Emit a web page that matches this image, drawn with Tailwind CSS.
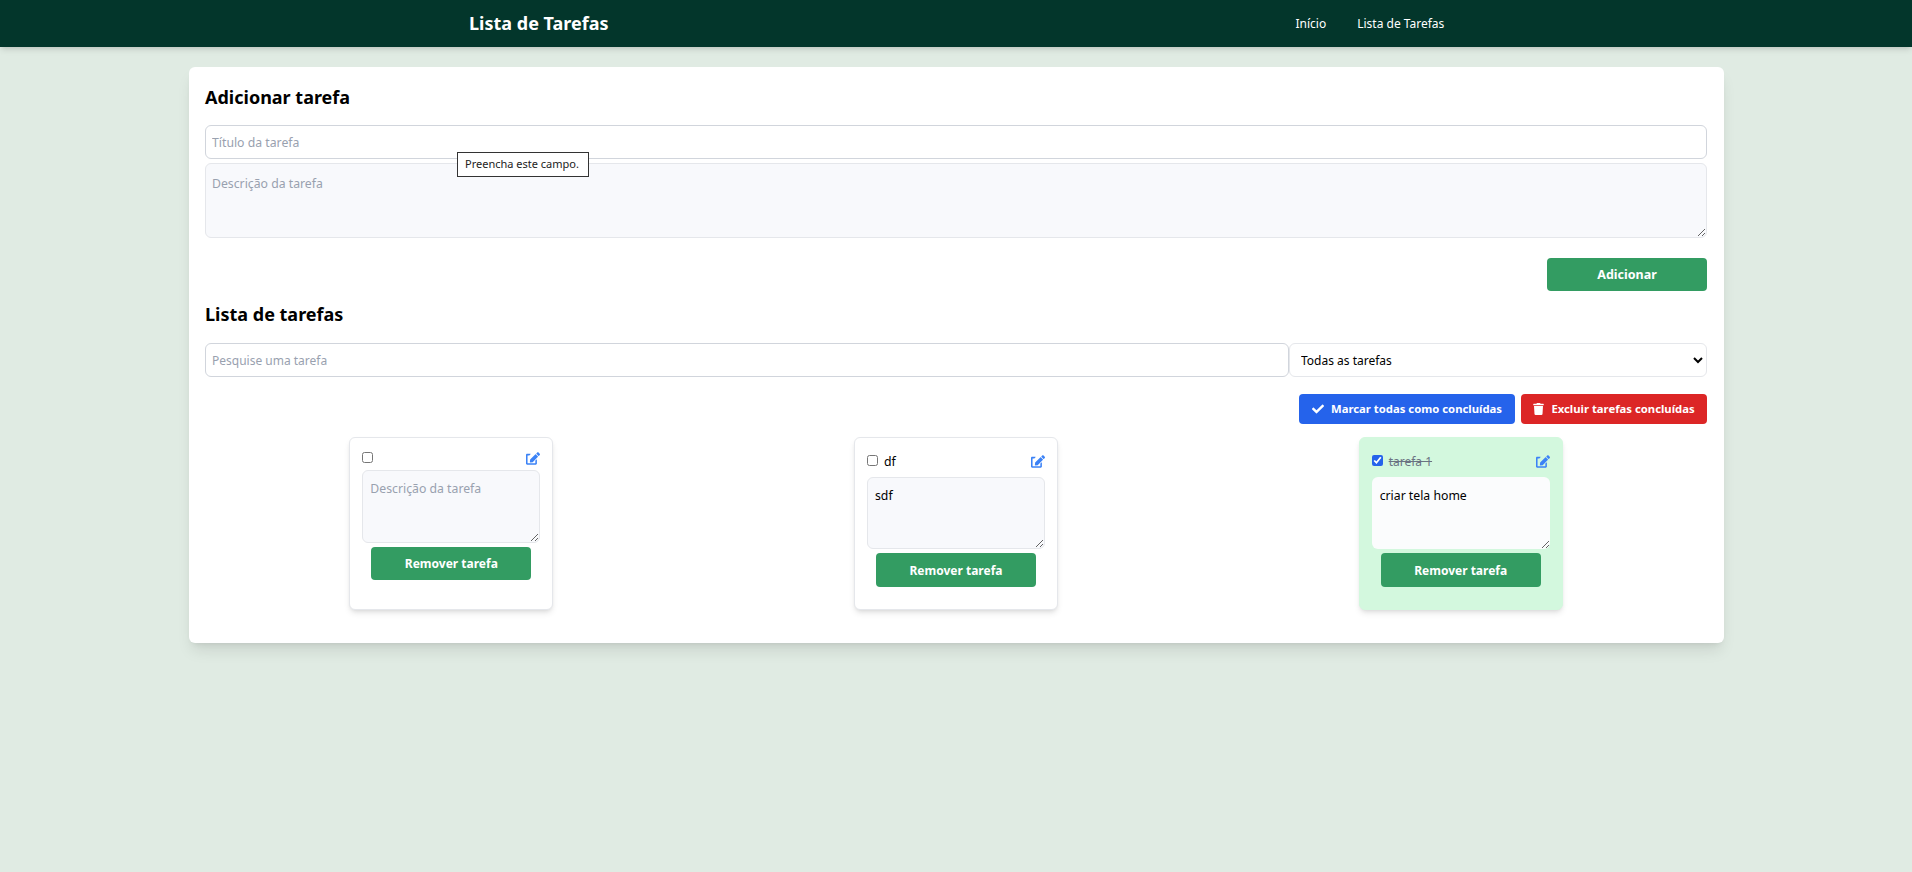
<!DOCTYPE html>
<html lang="pt-BR">
<head>
  <meta charset="UTF-8">
  <meta name="viewport" content="width=device-width, initial-scale=1.0">
  <title>Lista de Tarefas</title>
  <script src="https://cdn.jsdelivr.net/npm/@tailwindcss/browser@4"></script>
</head>
<body class="bg-[#e0ebe3] min-h-screen font-['Noto_Sans',sans-serif] text-black">
  <!-- Navbar -->
  <nav class="h-[47px] bg-[#03362b] shadow-md text-white flex items-center">
    <div class="w-[1536px] mx-auto flex items-center">
      <h1 class="ml-[281px] text-[18px] font-bold">Lista de Tarefas</h1>
      <ul class="ml-[687px] flex gap-[31px] text-[12px]">
        <li>Início</li>
        <li>Lista de Tarefas</li>
      </ul>
    </div>
  </nav>

  <main class="relative w-[1535px] ml-[189px] mt-[20px] bg-white rounded-md shadow-lg pl-4 pr-[17px] pt-[16px] pb-[33px]">
    <h2 class="text-[18px] leading-[28px] font-bold">Adicionar tarefa</h2>
    <form class="mt-[14px]">
      <input type="text" placeholder="Título da tarefa" class="block w-full h-[34px] px-[6px] text-[12.25px] border border-gray-300 rounded-md placeholder:text-gray-400">
      <textarea placeholder="Descrição da tarefa" class="block w-full h-[75px] mt-[4px] px-[6px] py-[11px] text-[12.25px] border border-gray-200 rounded-md bg-[#f8f9fc] placeholder:text-gray-400"></textarea>
      <div class="flex justify-end mt-[20px]">
        <button type="button" class="w-[160px] h-[33px] pt-[1px] bg-[#339c62] text-white text-[12.5px] font-bold rounded">Adicionar</button>
      </div>
    </form>

    <!-- Tooltip de validacao do navegador -->
    <div class="absolute left-[268px] top-[85px] w-[132px] h-[25px] px-[7px] flex items-center bg-white border border-[#333] text-[11px] text-[#222]">Preencha este campo.</div>

    <h2 class="text-[18px] leading-[26px] font-bold mt-[10px]">Lista de tarefas</h2>
    <div class="flex mt-[16px]">
      <input type="text" placeholder="Pesquise uma tarefa" class="flex-1 h-[34px] px-[6px] pt-[1px] text-[12px] border border-gray-300 rounded-md placeholder:text-gray-400">
      <select class="w-[418px] h-[34px] px-[7px] pt-[1px] text-[12px] border border-gray-200 rounded-md bg-white">
        <option>Todas as tarefas</option>
      </select>
    </div>

    <div class="flex justify-end gap-[6px] mt-[17px]">
      <button type="button" class="h-[30px] w-[216px] flex items-center justify-center gap-[7px] bg-[#2563eb] text-white text-[11.3px] font-bold rounded">
        <svg class="w-[12px] h-[12px]" viewBox="0 0 512 512" fill="currentColor"><path d="M173.898 439.404l-166.4-166.4c-9.997-9.997-9.997-26.206 0-36.204l36.203-36.204c9.997-9.998 26.207-9.998 36.204 0L192 312.69 432.095 72.596c9.997-9.997 26.207-9.997 36.204 0l36.203 36.204c9.997 9.997 9.997 26.206 0 36.204l-294.4 294.401c-9.998 9.997-26.207 9.997-36.204-.001z"/></svg>
        Marcar todas como concluídas
      </button>
      <button type="button" class="h-[30px] w-[186px] flex items-center justify-center gap-[7px] bg-[#dc2626] text-white text-[11.3px] font-bold rounded">
        <svg class="w-[11px] h-[12px]" viewBox="0 0 448 512" fill="currentColor"><path d="M432 32H312l-9.4-18.7A24 24 0 0 0 281.1 0H166.8a23.72 23.72 0 0 0-21.4 13.3L136 32H16A16 16 0 0 0 0 48v32a16 16 0 0 0 16 16h416a16 16 0 0 0 16-16V48a16 16 0 0 0-16-16zM53.2 467a48 48 0 0 0 47.9 45h245.8a48 48 0 0 0 47.9-45L416 128H32z"/></svg>
        Excluir tarefas concluídas
      </button>
    </div>

    <div class="grid grid-cols-3 gap-3 mt-[13px]">
      <!-- Tarefa sem titulo -->
      <div class="justify-self-center w-[204px] h-[173px] bg-white border border-gray-200 rounded-md shadow-md px-[12px] pt-[14px]">
        <div class="flex items-start justify-between h-[18px]">
          <input type="checkbox" class="w-[11px] h-[11px]">
          <svg class="w-[14px] h-[13px] text-[#3b82f6]" viewBox="0 0 576 512" fill="currentColor"><path d="M402.6 83.2l90.2 90.2c3.8 3.8 3.8 10 0 13.8L274.4 405.6l-92.8 10.3c-12.4 1.4-22.9-9.1-21.5-21.5l10.3-92.8L388.8 83.2c3.8-3.8 10-3.8 13.8 0zm162-22.9l-48.8-48.8c-15.2-15.2-39.9-15.2-55.2 0l-35.4 35.4c-3.8 3.8-3.8 10 0 13.8l90.2 90.2c3.8 3.8 10 3.8 13.8 0l35.4-35.4c15.2-15.3 15.2-40 0-55.2zM384 346.2V448H64V128h73.9c3.2 0 6.2-1.3 8.5-3.5l40-40c7.6-7.6 2.2-20.5-8.5-20.5H48C21.5 64 0 85.5 0 112v352c0 26.5 21.5 48 48 48h352c26.5 0 48-21.5 48-48V306.2c0-10.7-12.9-16-20.5-8.5l-40 40c-2.2 2.3-3.5 5.3-3.5 8.5z"/></svg>
        </div>
        <textarea placeholder="Descrição da tarefa" class="block w-full h-[73px] px-[7px] py-[9px] text-[12.25px] border border-gray-200 rounded-md bg-[#f8f9fc] placeholder:text-gray-400"></textarea>
        <button type="button" class="block w-[160px] h-[33px] mx-auto mt-[4px] pt-[1px] bg-[#339c62] text-white text-[12px] font-bold rounded">Remover tarefa</button>
      </div>

      <div class="justify-self-center w-[204px] h-[173px] bg-white border border-gray-200 rounded-md shadow-md px-[12px] pt-[14px]">
        <div class="flex items-start h-[25px]">
          <input type="checkbox" class="w-[11px] h-[11px] mt-[3px]">
          <span class="ml-[6px] text-[12.25px] leading-[20px]">df</span>
          <svg class="w-[14px] h-[13px] ml-auto text-[#3b82f6] mt-[3px]" viewBox="0 0 576 512" fill="currentColor"><path d="M402.6 83.2l90.2 90.2c3.8 3.8 3.8 10 0 13.8L274.4 405.6l-92.8 10.3c-12.4 1.4-22.9-9.1-21.5-21.5l10.3-92.8L388.8 83.2c3.8-3.8 10-3.8 13.8 0zm162-22.9l-48.8-48.8c-15.2-15.2-39.9-15.2-55.2 0l-35.4 35.4c-3.8 3.8-3.8 10 0 13.8l90.2 90.2c3.8 3.8 10 3.8 13.8 0l35.4-35.4c15.2-15.3 15.2-40 0-55.2zM384 346.2V448H64V128h73.9c3.2 0 6.2-1.3 8.5-3.5l40-40c7.6-7.6 2.2-20.5-8.5-20.5H48C21.5 64 0 85.5 0 112v352c0 26.5 21.5 48 48 48h352c26.5 0 48-21.5 48-48V306.2c0-10.7-12.9-16-20.5-8.5l-40 40c-2.2 2.3-3.5 5.3-3.5 8.5z"/></svg>
        </div>
        <textarea class="block w-full h-[72px] px-[7px] py-[9px] text-[12.25px] border border-gray-200 rounded-md bg-[#f8f9fc]">sdf</textarea>
        <button type="button" class="block w-[160px] h-[34px] mx-auto mt-[4px] pt-[1px] bg-[#339c62] text-white text-[12px] font-bold rounded">Remover tarefa</button>
      </div>

      <!-- Tarefa concluida -->
      <div class="justify-self-center w-[204px] h-[173px] bg-[#d3f8de] border border-[#d3f8de] rounded-md shadow-md px-[12px] pt-[14px]">
        <div class="flex items-start h-[25px]">
          <input type="checkbox" checked class="w-[11px] h-[11px] mt-[3px] accent-[#2563eb]">
          <span class="ml-[6px] text-[12px] leading-[20px] line-through text-gray-500">tarefa 1</span>
          <svg class="w-[14px] h-[13px] ml-auto text-[#3b82f6] mt-[3px]" viewBox="0 0 576 512" fill="currentColor"><path d="M402.6 83.2l90.2 90.2c3.8 3.8 3.8 10 0 13.8L274.4 405.6l-92.8 10.3c-12.4 1.4-22.9-9.1-21.5-21.5l10.3-92.8L388.8 83.2c3.8-3.8 10-3.8 13.8 0zm162-22.9l-48.8-48.8c-15.2-15.2-39.9-15.2-55.2 0l-35.4 35.4c-3.8 3.8-3.8 10 0 13.8l90.2 90.2c3.8 3.8 10 3.8 13.8 0l35.4-35.4c15.2-15.3 15.2-40 0-55.2zM384 346.2V448H64V128h73.9c3.2 0 6.2-1.3 8.5-3.5l40-40c7.6-7.6 2.2-20.5-8.5-20.5H48C21.5 64 0 85.5 0 112v352c0 26.5 21.5 48 48 48h352c26.5 0 48-21.5 48-48V306.2c0-10.7-12.9-16-20.5-8.5l-40 40c-2.2 2.3-3.5 5.3-3.5 8.5z"/></svg>
        </div>
        <textarea class="block w-full h-[72px] px-[8px] py-[10px] text-[12.25px] rounded-md bg-[#fbfcfd]">criar tela home</textarea>
        <button type="button" class="block w-[160px] h-[34px] mx-auto mt-[4px] pt-[1px] bg-[#339c62] text-white text-[12px] font-bold rounded">Remover tarefa</button>
      </div>
    </div>
  </main>
</body>
</html>
